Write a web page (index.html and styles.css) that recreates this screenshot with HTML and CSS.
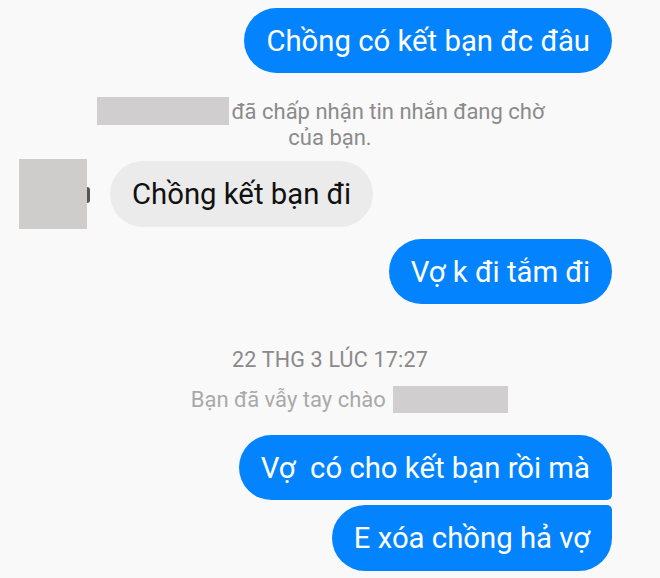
FILE: index.html
```html
<!DOCTYPE html>
<html lang="vi">
<head>
<meta charset="utf-8">
<link rel="stylesheet" href="styles.css">
</head>
<body>
<div class="chat">
  <div class="row out first">
    <div class="bubble blue">Chồng có kết bạn đc đâu</div>
  </div>
  <p class="system accept"><span class="redact name"></span>đã chấp nhận tin nhắn đang chờ<span class="hang"></span><br>của bạn.</p>
  <div class="row in">
    <div class="avatar"><span class="avatar-edge"></span></div>
    <div class="bubble grey">Chồng kết bạn đi</div>
  </div>
  <div class="row out third">
    <div class="bubble blue">Vợ k đi tắm đi</div>
  </div>
  <p class="stamp">22 THG 3 LÚC 17:27</p>
  <p class="wave">Bạn đã vẫy tay chào <span class="redact who"></span></p>
  <div class="row out group-top">
    <div class="bubble blue top">Vợ&nbsp; có cho kết bạn rồi mà</div>
  </div>
  <div class="row out group-bottom">
    <div class="bubble blue bottom">E xóa chồng hả vợ</div>
  </div>
</div>
</body>
</html>
```

FILE: styles.css
```css
html, body {
  margin: 0;
  padding: 0;
  background: #f9f9f9;
}

body {
  width: 660px;
  height: 578px;
  overflow: hidden;
  font-family: Roboto, "Noto Sans", sans-serif;
}

.chat {
  display: flex;
  flex-direction: column;
  padding-top: 8px;
}

.row {
  display: flex;
  align-items: center;
}

.row.out {
  justify-content: flex-end;
  padding-right: 48px;
}

.bubble {
  height: 65px;
  box-sizing: border-box;
  display: flex;
  align-items: center;
  padding: 0 22px 0 22px;
  border-radius: 33px;
  font-size: 29.3px;
  white-space: nowrap;
}

.bubble.blue {
  background: #0384fe;
  color: #ffffff;
}

.bubble.grey {
  background: #ebebeb;
  color: #111111;
  height: 66px;
}

.bubble.top {
  border-bottom-right-radius: 5px;
}

.bubble.bottom {
  border-top-right-radius: 5px;
  height: 66px;
}

.system {
  margin: 24px auto 0;
  width: 470px;
  text-align: center;
  font-size: 22px;
  line-height: 26px;
  color: #8b8b8b;
}

.hang {
  display: inline-block;
  width: 18px;
}

.redact {
  display: inline-block;
  background: #d0cece;
  vertical-align: -6px;
}

.redact.name {
  width: 132px;
  height: 28px;
  margin-right: 2px;
}

.row.in {
  margin-top: 8px;
  padding-left: 19px;
  gap: 23px;
}

.avatar {
  position: relative;
  width: 68px;
  height: 70px;
  background: #cfcccc;
}

.avatar-edge {
  position: absolute;
  right: -3px;
  top: 28px;
  width: 3px;
  height: 16px;
  border-radius: 0 3px 3px 0;
  background: #555;
}

.row.third {
  margin-top: 10px;
}

.stamp {
  margin: 44px 0 0;
  text-align: center;
  font-size: 21.5px;
  line-height: 24px;
  color: #8a8a8a;
  letter-spacing: 0.2px;
}

.wave {
  margin: 14px 0 0;
  text-align: center;
  font-size: 22px;
  line-height: 28px;
  color: #a9a9a9;
  padding-left: 39px;
}

.redact.who {
  width: 115px;
  height: 27px;
  margin-left: 2px;
}

.row.group-top {
  margin-top: 21px;
}

.row.group-bottom {
  margin-top: 5px;
}
```
